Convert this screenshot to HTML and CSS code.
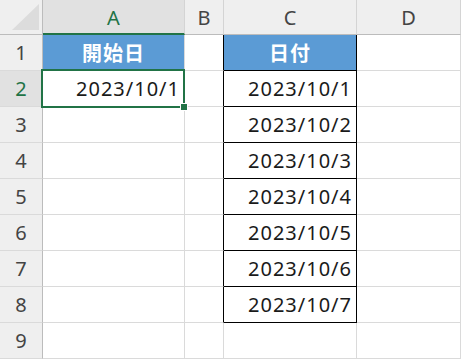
FILE: index.html
```html
<!DOCTYPE html>
<html lang="ja">
<head>
<meta charset="UTF-8">
<title>日付</title>
<link rel="stylesheet" href="styles.css">
</head>
<body>
<div class="sheet">
  <div class="corner">
    <svg width="43" height="35" viewBox="0 0 43 35"><polygon points="40,5 40,31 13,31" fill="#dcdcdc"/></svg>
  </div>
  <div class="colhead sel">A</div>
  <div class="colhead">B</div>
  <div class="colhead">C</div>
  <div class="colhead">D</div>

  <div class="rowhead">1</div>
  <div class="cell title">開始日</div>
  <div class="cell lb"></div>
  <div class="cell title box">日付</div>
  <div class="cell"></div>

  <div class="rowhead sel">2</div>
  <div class="cell num">2023/10/1</div>
  <div class="cell lb"></div>
  <div class="cell num box">2023/10/1</div>
  <div class="cell"></div>

  <div class="rowhead">3</div>
  <div class="cell"></div>
  <div class="cell lb"></div>
  <div class="cell num box">2023/10/2</div>
  <div class="cell"></div>

  <div class="rowhead">4</div>
  <div class="cell"></div>
  <div class="cell lb"></div>
  <div class="cell num box">2023/10/3</div>
  <div class="cell"></div>

  <div class="rowhead">5</div>
  <div class="cell"></div>
  <div class="cell lb"></div>
  <div class="cell num box">2023/10/4</div>
  <div class="cell"></div>

  <div class="rowhead">6</div>
  <div class="cell"></div>
  <div class="cell lb"></div>
  <div class="cell num box">2023/10/5</div>
  <div class="cell"></div>

  <div class="rowhead">7</div>
  <div class="cell"></div>
  <div class="cell lb"></div>
  <div class="cell num box">2023/10/6</div>
  <div class="cell"></div>

  <div class="rowhead">8</div>
  <div class="cell"></div>
  <div class="cell lb"></div>
  <div class="cell num box">2023/10/7</div>
  <div class="cell"></div>

  <div class="rowhead">9</div>
  <div class="cell"></div>
  <div class="cell"></div>
  <div class="cell"></div>
  <div class="cell"></div>

  <div class="selection"><span class="handle"></span></div>
</div>
</body>
</html>
```

FILE: styles.css
```css
body {
    margin: 0;
    background: #ffffff;
    font-family: "Noto Sans CJK JP", "Noto Sans", sans-serif;
}

.sheet {
    position: relative;
    display: grid;
    grid-template-columns: 43px 142px 39px 133px 1fr;
    grid-template-rows: 35px repeat(9, 36px);
    width: 461px;
    height: 360px;
    overflow: hidden;
}

.corner {
    background: #efefef;
    border-right: 1px solid #bcbcbc;
    border-bottom: 1px solid #bcbcbc;
    box-sizing: border-box;
}
.corner svg {
    display: block;
    margin: -1px 0 0 -1px;
}

.colhead {
    background: #efefef;
    border-right: 1px solid #d4d4d4;
    border-bottom: 1px solid #bcbcbc;
    box-sizing: border-box;
    display: flex;
    align-items: center;
    justify-content: center;
    color: #444444;
    font-family: "Noto Sans", "Liberation Sans", sans-serif;
    font-size: 20px;
    padding-top: 1px;
}
.colhead.sel {
    background: #e1e1e1;
    color: #217346;
    border-bottom: 2px solid #217346;
}

.rowhead {
    background: #efefef;
    border-right: 1px solid #bcbcbc;
    border-bottom: 1px solid #dadada;
    box-sizing: border-box;
    display: flex;
    align-items: center;
    justify-content: center;
    color: #444444;
    font-family: "Noto Sans", "Liberation Sans", sans-serif;
    font-size: 20px;
}
.rowhead.sel {
    background: #e1e1e1;
    color: #217346;
}

.cell {
    border-right: 1px solid #dadada;
    border-bottom: 1px solid #dadada;
    box-sizing: border-box;
    display: flex;
    align-items: center;
    padding: 0 5px;
    font-size: 20px;
    color: #000000;
}
.cell.lb {
    border-right-color: #000000;
}
.cell.box {
    border-right-color: #000000;
    border-bottom-color: #000000;
}
.cell.title {
    background: #5b9bd5;
    color: #ffffff;
    font-weight: bold;
    justify-content: center;
    letter-spacing: 1px;
}
.cell.num {
    justify-content: flex-end;
    padding-right: 4px;
    font-family: "Noto Sans", "Liberation Sans", sans-serif;
    letter-spacing: 1px;
    color: #1a1a1a;
}

.selection {
    position: absolute;
    left: 41px;
    top: 69px;
    width: 144px;
    height: 39px;
    border: 2px solid #217346;
    box-sizing: border-box;
}
.handle {
    position: absolute;
    right: -5px;
    bottom: -5px;
    width: 6px;
    height: 6px;
    background: #217346;
    border: 1px solid #ffffff;
}
```
